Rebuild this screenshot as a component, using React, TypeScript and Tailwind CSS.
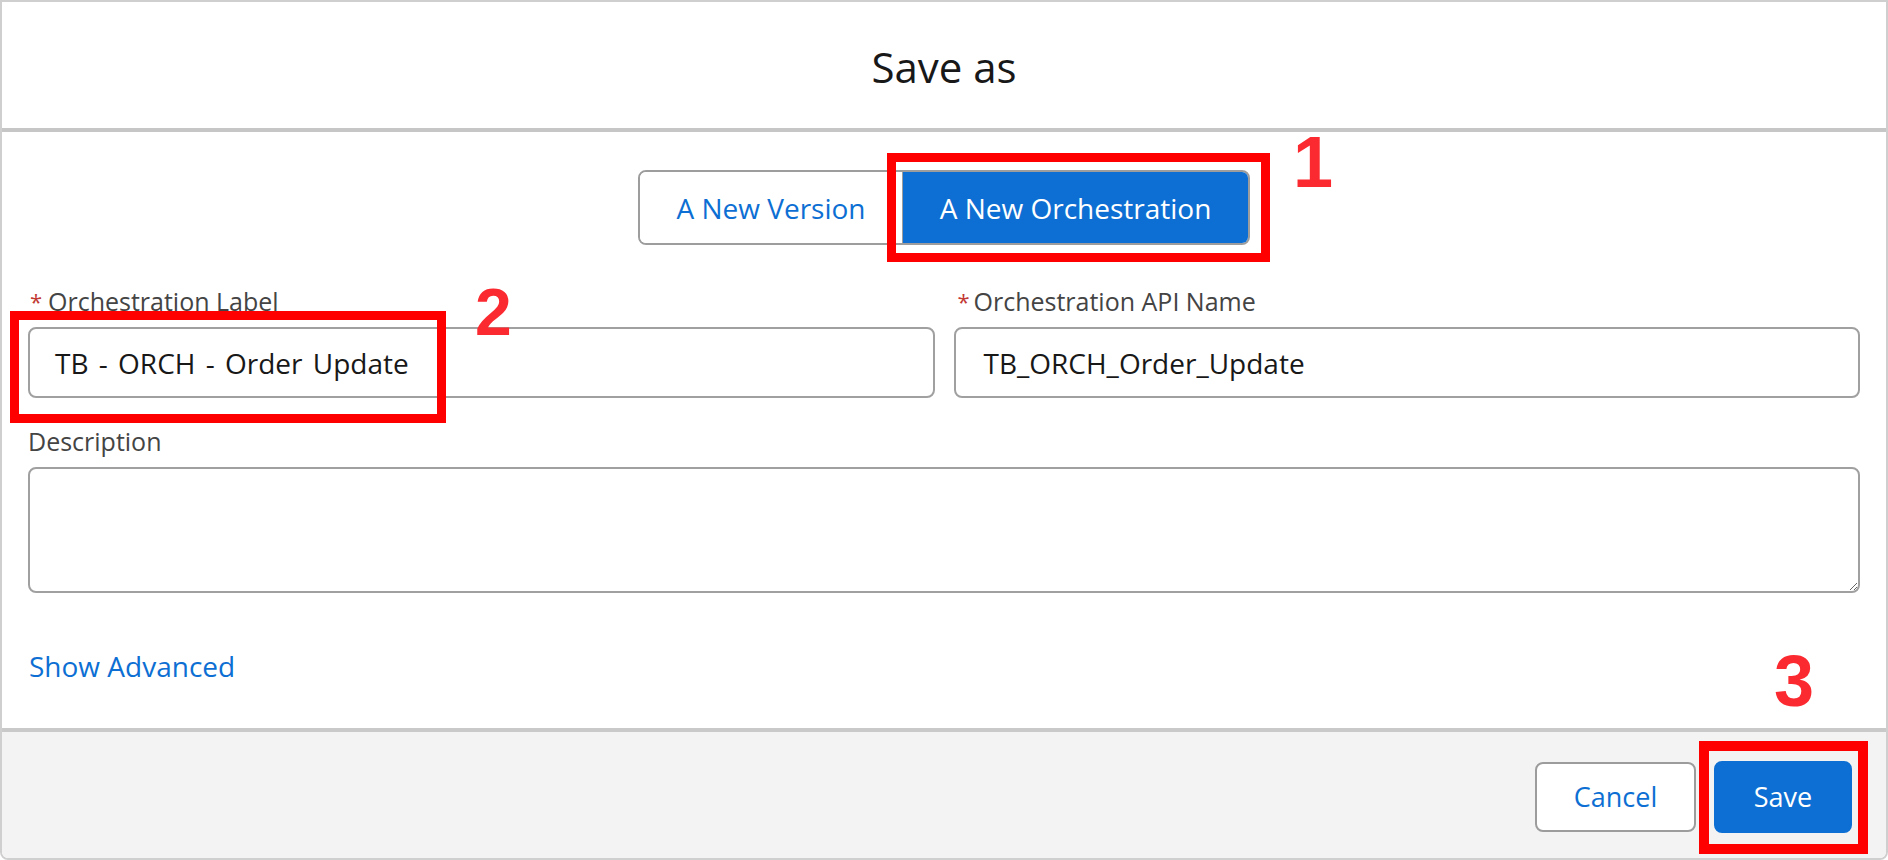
import React from "react";

export default function App() {
  return (
    <div className="relative w-[1888px] h-[860px] bg-white font-['Open_Sans',sans-serif]">
      <div className="w-[1888px] h-[860px] bg-white border-2 border-[#cfcfcf] rounded-b-[8px] flex flex-col overflow-hidden">
        {/* Header */}
        <div className="h-[130px] shrink-0 flex items-center justify-center border-b-[4px] border-[#c6c6c6] pt-[3px]">
          <h2 className="text-[42px] leading-[57px] text-[#181818]">Save as</h2>
        </div>

        {/* Body */}
        <div className="flex-1 px-[26px] pt-[38px]">
          <div className="flex justify-center">
            <div className="flex h-[75px] border-2 border-[#9d9d9d] rounded-[8px] overflow-hidden">
              <button className="w-[263px] bg-white text-[28px] text-[#0d6fd3] flex items-center justify-center border-r border-[#9d9d9d]">
                A New Version
              </button>
              <button className="w-[345px] bg-[#0d6fd3] text-[28px] text-white flex items-center justify-center">
                A New Orchestration
              </button>
            </div>
          </div>

          <div className="grid grid-cols-2 gap-x-[19px] mt-[39px]">
            <div>
              <label className="flex text-[25px] leading-[34px] text-[#444444]">
                <span className="w-[20px] pl-[2px] text-[#c23934] text-[22px]">*</span>
                Orchestration Label
              </label>
              <div className="mt-[9px] h-[71px] border-2 border-[#a0a0a0] rounded-[8px] pl-[25px] flex items-center text-[28px] text-[#181818] bg-white [word-spacing:3px]">
                TB - ORCH - Order Update
              </div>
            </div>
            <div>
              <label className="flex text-[25px] leading-[34px] text-[#444444]">
                <span className="w-[20px] pl-[4px] text-[#c23934] text-[22px]">*</span>
                Orchestration API Name
              </label>
              <div className="mt-[9px] h-[71px] border-2 border-[#a0a0a0] rounded-[8px] pl-[28px] flex items-center text-[28px] text-[#181818] bg-white">
                TB_ORCH_Order_Update
              </div>
            </div>
          </div>

          <div className="mt-[26px]">
            <label className="block text-[25px] leading-[34px] text-[#444444]">Description</label>
            <textarea className="mt-[9px] block w-full h-[126px] border-2 border-[#a0a0a0] rounded-[8px] bg-white outline-none" />
          </div>

          <div className="mt-[54px] text-[28px] leading-[38px] text-[#0d6fd3] pl-[1px]">Show Advanced</div>
        </div>

        {/* Footer */}
        <div className="h-[130px] shrink-0 border-t-[4px] border-[#c9c9c9] bg-[#f3f3f3] flex justify-end items-start pt-[29px] pr-[34px] gap-[18px]">
          <button className="mt-[1px] w-[161px] h-[70px] border-2 border-[#9c9c9c] rounded-[8px] bg-white text-[27px] text-[#0d6fd3] flex items-center justify-center">
            Cancel
          </button>
          <button className="w-[138px] h-[72px] border-2 border-[#0d6fd3] rounded-[8px] bg-[#0d6fd3] text-[27px] text-white flex items-center justify-center">
            Save
          </button>
        </div>
      </div>

      {/* Annotations */}
      <div className="absolute left-[887px] top-[153px] w-[383px] h-[109px] border-[9px] border-[#ff0000]" />
      <div className="absolute left-[10px] top-[311px] w-[436px] h-[112px] border-[9px] border-[#ff0000]" />
      <div className="absolute left-[1699px] top-[741px] w-[169px] h-[113px] border-[10px] border-[#ff0000]" />

      <span className="absolute left-[1293px] top-[126px] text-[72px] leading-none font-bold text-[#fb2a30] font-['Liberation_Sans',Arial,sans-serif]">1</span>
      <span className="absolute left-[475px] top-[279px] text-[66px] leading-none font-bold text-[#fb2a30] font-['Liberation_Sans',Arial,sans-serif]">2</span>
      <span className="absolute left-[1774px] top-[645px] text-[72px] leading-none font-bold text-[#fb2a30] font-['Liberation_Sans',Arial,sans-serif]">3</span>
    </div>
  );
}
